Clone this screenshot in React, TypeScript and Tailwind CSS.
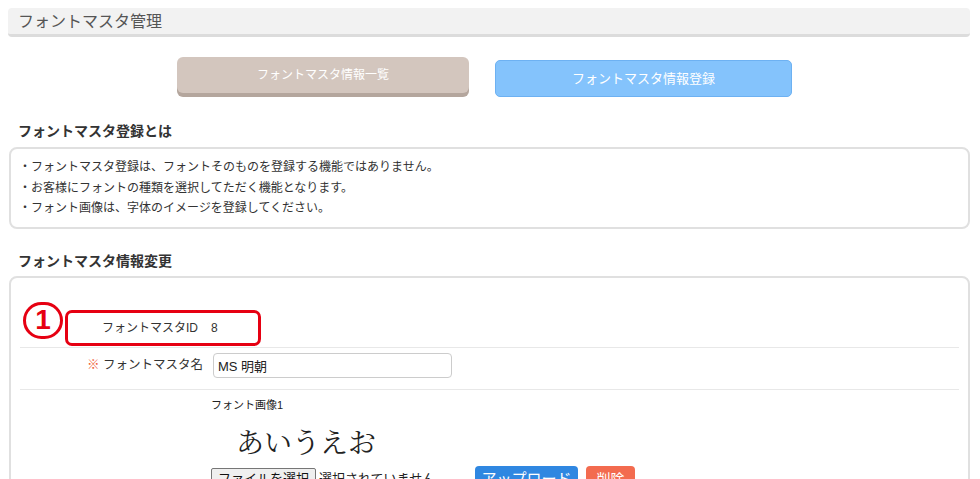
import React from 'react';

const notes = [
  'フォントマスタ登録は、フォントそのものを登録する機能ではありません。',
  'お客様にフォントの種類を選択してただく機能となります。',
  'フォント画像は、字体のイメージを登録してください。',
];

export default function App() {
  return (
    <div className="w-[980px] h-[479px] overflow-hidden bg-white pt-[8px] font-[Liberation_Sans,Noto_Sans_CJK_JP,sans-serif] text-[#333]">
      {/* Page title bar */}
      <div className="mx-[8px] mr-[10px] h-[29px] rounded-[4px] bg-[#f2f2f2] border-b-[3px] border-[#dcdcdc] flex items-center pl-[10px]">
        <h1 className="mt-[2px] text-[16px] leading-[20px] text-[#555]">フォントマスタ管理</h1>
      </div>

      {/* Tab buttons */}
      <div className="mt-[20px] flex items-start pl-[177px]">
        <button className="w-[292px] h-[36px] rounded-[6px] bg-[#d3c6be] shadow-[0_4px_0_#b4a69d] text-white text-[12px] leading-[36px]">
          フォントマスタ情報一覧
        </button>
        <button className="ml-[26px] mt-[3px] w-[297px] h-[37px] rounded-[5px] bg-[#84c3fc] border border-[#6db1f2] text-white text-[13px]">
          フォントマスタ情報登録
        </button>
      </div>

      {/* About */}
      <h2 className="mt-[24px] mb-[6px] ml-[18px] text-[14px] leading-[20px] font-bold text-[#333]">フォントマスタ登録とは</h2>
      <div className="ml-[9px] mr-[10px] border-2 border-[#e0e0e0] rounded-[8px] pl-[8px] py-[8px]">
        {notes.map((n) => (
          <p key={n} className="text-[12px] leading-[20.5px] text-[#333]">・{n}</p>
        ))}
      </div>

      {/* Edit form */}
      <h2 className="mt-[22px] mb-[5px] ml-[18px] text-[14px] leading-[20px] font-bold text-[#333]">フォントマスタ情報変更</h2>
      <div className="ml-[9px] mr-[10px] border-2 border-[#e0e0e0] rounded-[8px] px-[9px] pb-[40px]">
        {/* ID row */}
        <div className="flex items-start pt-[24px]">
          <div className="ml-[3px] w-[40px] h-[37px] rounded-full border-[3px] border-[#e60012] flex items-center justify-center text-[#e60012] text-[28px] font-bold leading-none">
            1
          </div>
          <div className="ml-[2px] mt-[8px] w-[196px] h-[36px] rounded-[7px] border-[3px] border-[#e60012] flex items-center pl-[34px] text-[12px] text-[#333]">
            <span>フォントマスタID</span>
            <span className="ml-[13px]">8</span>
          </div>
        </div>
        <div className="mt-[1px] border-t border-[#e8e8e8]" />

        {/* Name row */}
        <div className="flex items-center pt-[5px] pb-[11px]">
          <label className="w-[183px] text-right text-[12.5px] text-[#333]">
            <span className="text-[#f0603a]">※</span> フォントマスタ名
          </label>
          <input
            defaultValue="MS 明朝"
            className="ml-[10px] w-[239px] h-[25px] rounded-[4px] border border-[#cccccc] pl-[4px] text-[13px] text-[#222] outline-none"
          />
        </div>
        <div className="border-t border-[#e8e8e8]" />

        {/* Image row */}
        <div className="pl-[191px] pt-[8px]">
          <p className="text-[11px] leading-[14px] text-[#222]">フォント画像1</p>
          <p className="mt-[13px] ml-[25px] text-[28px] leading-[32px] text-[#222] font-[Noto_Serif_CJK_JP,IPAMincho,serif]">あいうえお</p>
          <div className="mt-[9px] flex items-start">
            <button className="mt-[2px] w-[105px] h-[22px] rounded-[2px] bg-[#efefef] border border-[#767676] text-[13px] leading-[20px] text-[#111]">
              ファイルを選択
            </button>
            <span className="ml-[3px] w-[156px] mt-[3px] text-[13px] text-[#222]">選択されていません</span>
            <button className="w-[103px] h-[28px] rounded-[4px] bg-[#2f87e1] text-white text-[15px]">アップロード</button>
            <button className="ml-[8px] w-[49px] h-[28px] rounded-[4px] bg-[#f36b4f] text-white text-[14px]">削除</button>
          </div>
        </div>
      </div>
    </div>
  );
}
